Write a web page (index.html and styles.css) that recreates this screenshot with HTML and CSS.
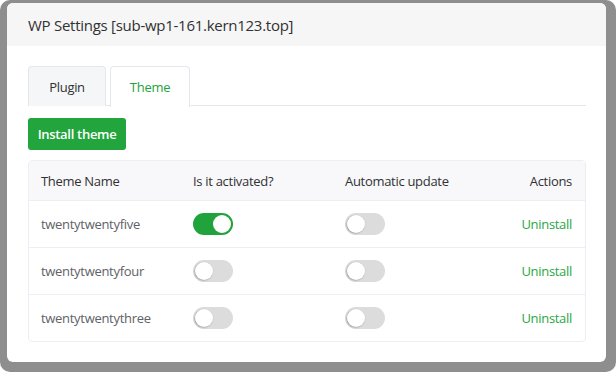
FILE: index.html
```html
<!DOCTYPE html>
<html>
<head>
<meta charset="utf-8">
<link rel="stylesheet" href="styles.css">
</head>
<body>
<div class="frame">
  <div class="dialog">
    <div class="header">WP Settings [sub-wp1-161.kern123.top]</div>
    <div class="content">
      <div class="tabs">
        <div class="tab">Plugin</div>
        <div class="tab active">Theme</div>
      </div>
      <button class="btn">Install theme</button>
      <div class="table-wrap">
        <table class="grid">
          <colgroup>
            <col class="c1"><col class="c2"><col class="c3"><col>
          </colgroup>
          <thead>
            <tr><th>Theme Name</th><th>Is it activated?</th><th>Automatic update</th><th class="right">Actions</th></tr>
          </thead>
          <tbody>
            <tr><td>twentytwentyfive</td><td><span class="switch on"></span></td><td><span class="switch"></span></td><td class="right"><span class="link">Uninstall</span></td></tr>
            <tr><td>twentytwentyfour</td><td><span class="switch"></span></td><td><span class="switch"></span></td><td class="right"><span class="link">Uninstall</span></td></tr>
            <tr><td>twentytwentythree</td><td><span class="switch"></span></td><td><span class="switch"></span></td><td class="right"><span class="link">Uninstall</span></td></tr>
          </tbody>
        </table>
      </div>
    </div>
  </div>
</div>
</body>
</html>
```
FILE: styles.css
```css
html, body { margin: 0; padding: 0; background: #ffffff; }
body { font-family: "Open Sans", "Noto Sans", sans-serif; letter-spacing: -0.3px; }
.frame {
  width: 616px; height: 372px; box-sizing: border-box;
  background: #8e8e8e; border-radius: 10px;
  padding: 3px 10px 10px 7px;
}
.dialog {
  background: #fff; border-radius: 6px; height: 359px; overflow: hidden;
}
.header {
  height: 43px; background: #f6f6f6; display: flex; align-items: center;
  padding-left: 21px; font-size: 15px; color: #303133; letter-spacing: -0.27px;
}
.content { padding: 20px 20px 0 21px; }
.tabs {
  display: flex; gap: 4px; height: 40px; box-sizing: border-box;
  border-bottom: 1px solid #e4e7ed;
}
.tab {
  width: 78px; height: 40px; box-sizing: border-box;
  display: flex; align-items: center; justify-content: center;
  font-size: 13px; color: #303133; background: #f5f6f8;
  border: 1px solid #e4e7ed; border-bottom: none; border-radius: 4px 4px 0 0;
}
.tab.active { width: 80px; background: #fff; color: #22a33d; height: 41px; }
.btn {
  display: block; margin-top: 12px; height: 32px; width: 98px; padding: 0;
  border: none; border-radius: 3px; background: #21a53c; color: #fff;
  font-family: inherit; font-size: 13px; font-weight: 600; letter-spacing: -0.3px;
}
.table-wrap {
  margin-top: 10px; border: 1px solid #ebeef5; border-radius: 4px; overflow: hidden;
}
.grid { width: 100%; border-collapse: collapse; table-layout: fixed; font-size: 13px; }
.c1, .c2, .c3 { width: 152px; }
th {
  height: 39px; background: #f8f8fa; font-weight: 400; color: #303133;
  text-align: left; padding: 0 0 0 12px; border-bottom: 1px solid #ebeef5;
}
td {
  height: 46px; padding: 0 0 0 12px; color: #606266;
  border-bottom: 1px solid #ebeef5;
}
tbody tr:last-child td { border-bottom: none; }
th.right, td.right { text-align: right; padding: 0 13px 0 0; }
.link { color: #29a745; }
.switch {
  display: block; width: 40px; height: 22px; border-radius: 11px;
  background: #dcdcdc; position: relative;
}
.switch::after {
  content: ""; position: absolute; top: 2px; left: 2px; width: 18px; height: 18px;
  border-radius: 50%; background: #fff; box-shadow: -0.5px 0.5px 1.5px rgba(0,0,0,0.35);
}
.switch.on { background: #20a33b; }
.switch.on::after { left: 20px; box-shadow: none; }
```
